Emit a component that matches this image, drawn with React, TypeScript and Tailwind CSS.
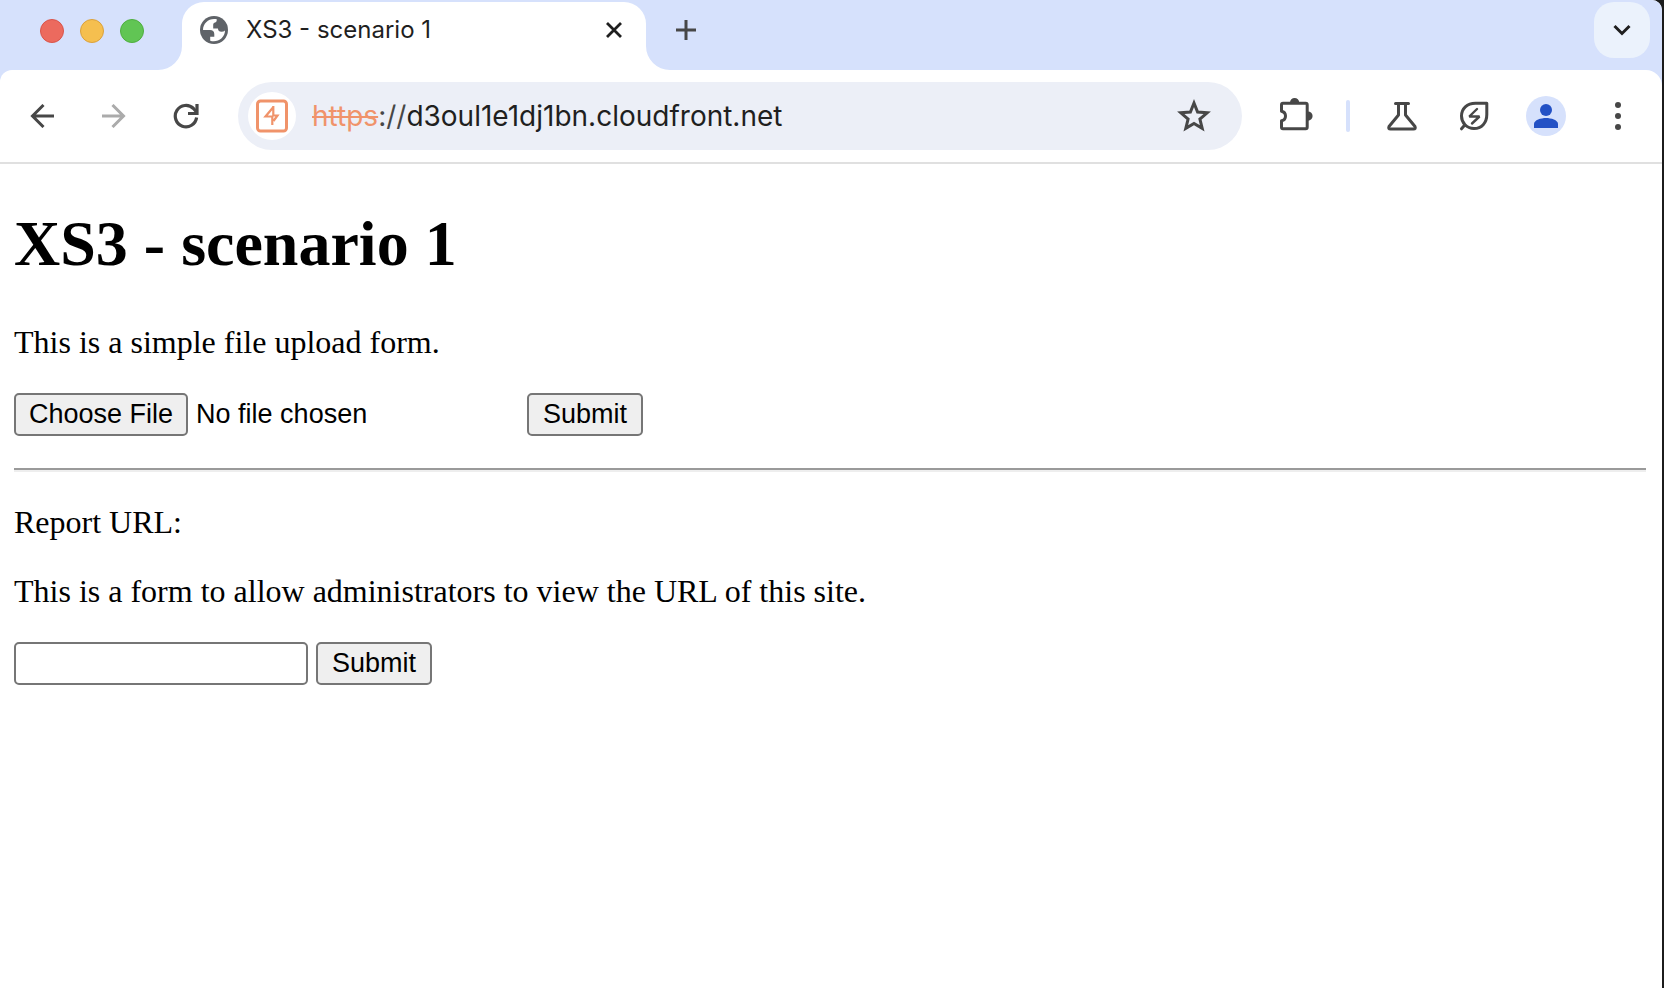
import React from "react";

const toolIcon = "shrink-0 text-[#474747]";

function Globe() {
  return (
    <svg viewBox="0 0 28 28" className="size-7 shrink-0" aria-hidden="true">
      <circle cx="14" cy="14" r="14" fill="#5f6368" />
      <path
        d="M16.800 3.300C9.500 1.600 3 7 3 14h7c2.600 0 4.300 1.500 4.300 3.900v2.900h-4.100v3.900C17.500 27 25 21.800 25 14.500c-.9.8-2.100 1.200-3.500 1.200-2.300 0-3.300-1-3.600-3.200h-4.700V8.800c0-1.400.7-2.100 2-2.300 1.200-.2 1.600-1.500 1.600-3.200z"
        fill="#fff"
      />
    </svg>
  );
}

function ProxyIcon() {
  return (
    <svg viewBox="0 0 32 34" className="h-[34px] w-8" fill="none" stroke="#f0936a" aria-hidden="true">
      <rect x="1.500" y="2" width="29" height="30" rx="3" strokeWidth="3" />
      <path d="M17.300 7v9.500h4.200l-4 5.500M17 8.500L9.500 17.500h6.800V26" strokeWidth="2.200" />
    </svg>
  );
}

function Tab() {
  return (
    <div className="relative mt-[2px] flex h-[68px] w-[464px] items-start rounded-t-[22px] bg-white pl-[18px] pr-[20px]">
      <svg viewBox="0 0 24 24" className="absolute bottom-0 -left-6 size-6" aria-hidden="true">
        <path d="M24 0v24H0A24 24 0 0 0 24 0z" fill="#fff" />
      </svg>
      <svg viewBox="0 0 24 24" className="absolute -right-6 bottom-0 size-6" aria-hidden="true">
        <path d="M0 0v24h24A24 24 0 0 1 0 0z" fill="#fff" />
      </svg>
      <div className="flex h-14 w-full items-center">
        <Globe />
        <span className="ml-[18px] flex-1 font-['Inter',sans-serif] text-[24px] leading-8 text-[#1f1f1f]">
          XS3 - scenario 1
        </span>
        <button aria-label="Close tab" className="flex size-6 items-center justify-center">
          <svg viewBox="0 0 16 16" className="size-4" fill="none" stroke="#1f1f1f" strokeWidth="2.800">
            <path d="M1 1l14 14M15 1L1 15" />
          </svg>
        </button>
      </div>
    </div>
  );
}

function TabStrip() {
  return (
    <div className="flex h-[70px] items-start">
      <div className="mt-[19px] mr-[38px] ml-10 flex gap-4">
        <button aria-label="Close" className="size-6 rounded-full border border-[#d9544a] bg-[#ec6a5e]" />
        <button aria-label="Minimize" className="size-6 rounded-full border border-[#dba13c] bg-[#f5bf4f]" />
        <button aria-label="Zoom" className="size-6 rounded-full border border-[#4fae3f] bg-[#61c554]" />
      </div>
      <Tab />
      <button aria-label="New tab" className="mt-[2px] ml-3 flex size-14 items-center justify-center">
        <svg viewBox="0 0 20 20" className="size-5" fill="none" stroke="#474747" strokeWidth="3">
          <path d="M10 0v20M0 10h20" />
        </svg>
      </button>
      <button
        aria-label="Search tabs"
        className="mt-[2px] mr-3 ml-auto flex size-14 items-center justify-center rounded-[20px] bg-[#ebf2fc]"
      >
        <svg viewBox="0 0 18 12" className="h-3 w-[18px]" fill="none" stroke="#1f1f1f" strokeWidth="3">
          <path d="M1.500 2L9 9.500 16.500 2" />
        </svg>
      </button>
    </div>
  );
}

function Toolbar() {
  return (
    <div className="flex h-[94px] items-center rounded-tl-[12px] rounded-tr-[16px] border-b-2 border-[#e0e0e0] bg-white pr-[26px] pl-[24px]">
      <button aria-label="Back" className="flex size-9 items-center justify-center">
        <svg viewBox="0 0 24 24" className="size-6" fill="none" stroke="#474747" strokeWidth="3">
          <path d="M24 12H2.500M13.500 1L2.500 12l11 11" />
        </svg>
      </button>
      <button aria-label="Forward" disabled className="ml-9 flex size-9 items-center justify-center">
        <svg viewBox="0 0 24 24" className="size-6" fill="none" stroke="#ababab" strokeWidth="3">
          <path d="M0 12h21.500M10.500 1l11 11-11 11" />
        </svg>
      </button>
      <button aria-label="Reload" className="ml-9 flex size-9 items-center justify-center">
        <svg viewBox="0 0 26 26" className="size-[26px]" fill="none" stroke="#474747" strokeWidth="3.200">
          <path d="M23.600 14.500A10.700 10.700 0 1 1 20.500 5.500L23.500 9" />
          <path d="M24 1v9.500h-9" />
        </svg>
      </button>

      <div className="ml-[34px] flex h-[68px] min-w-0 flex-1 items-center rounded-full bg-[#eceff7] pr-[30px] pl-[10px]">
        <div className="flex size-12 shrink-0 items-center justify-center rounded-full bg-white">
          <ProxyIcon />
        </div>
        <div className="ml-4 flex-1 font-['Inter',sans-serif] text-[28px] leading-9 whitespace-nowrap text-[#1f1f1f]">
          <span className="text-[#f0936a] line-through">https</span>
          <span className="text-[#474747]">://</span>d3oul1e1dj1bn.cloudfront.net
        </div>
        <button aria-label="Bookmark this tab" className="size-9">
          <svg viewBox="0 0 36 36" className="size-9" fill="none" stroke="#474747" strokeWidth="3">
            <path d="M18 5l3.600 9 9.600.8-7.300 6.200 2.300 9.400-8.200-5-8.200 5 2.300-9.400-7.300-6.200 9.600-.8z" />
          </svg>
        </button>
      </div>

      <button aria-label="Extensions" className={"ml-[34px] size-9 " + toolIcon}>
        <svg viewBox="-1 0 36 36" className="size-9 overflow-visible">
          <path
            d="M4.500 6.700q0-1.500 1.500-1.500h22.700q1.500 0 1.500 1.500v22.600q0 1.500-1.500 1.500H6q-1.500 0-1.500-1.500v-6.500c2.800-.6 4-2.500 4-4.800s-1.200-4.200-4-4.800z"
            fill="none"
            stroke="currentColor"
            strokeWidth="3"
            strokeLinejoin="round"
          />
          <path d="M13 4.500a4.600 4.600 0 0 1 9.200 0zM31 13.500a4.600 4.600 0 0 1 0 9.200z" fill="currentColor" />
        </svg>
      </button>
      <div className="ml-[34px] h-8 w-1 rounded-full bg-[#d6e1fc]" />
      <button aria-label="Labs" className={"ml-[34px] size-9 " + toolIcon}>
        <svg viewBox="0 0 36 36" className="size-9" fill="none" stroke="currentColor" strokeWidth="3" strokeLinejoin="round" strokeLinecap="round">
          <path d="M11.500 5.500h13M14.500 6v11L5 28.500q-1 2.500 1.500 2.500h23q2.500 0 1.500-2.500L21.500 17V6" />
        </svg>
      </button>
      <button aria-label="Energy saver" className={"ml-9 size-9 " + toolIcon}>
        <svg viewBox="0 0 36 36" className="size-9" fill="none" stroke="currentColor" strokeWidth="3" strokeLinecap="round">
          <path
            d="M30.800 5.200H19.500C11 5.200 5.500 10.500 5.500 18c0 3.500 1.300 6.500 3.500 8.800 2.300 2.400 5.500 3.700 9 3.700 7.500 0 12.800-5.500 12.800-14zM5.500 30.800l3.500-4"
            strokeLinejoin="round"
          />
          <path d="M21 11L13.300 18.500H23.500L16 25.500" strokeWidth="2.400" strokeLinejoin="bevel" />
        </svg>
      </button>
      <button aria-label="Profile" className="ml-[34px] size-10 shrink-0 overflow-hidden rounded-full bg-[#d6e1fc]">
        <svg viewBox="0 0 40 40" className="size-10" fill="#2351c5">
          <circle cx="20" cy="14" r="6" />
          <path d="M8 32v-4c0-4 7-6 12-6s12 2 12 6v4z" />
        </svg>
      </button>
      <button aria-label="Menu" className={"ml-[34px] size-9 " + toolIcon}>
        <svg viewBox="0 0 36 36" className="size-9" fill="currentColor">
          <circle cx="18" cy="7" r="3" />
          <circle cx="18" cy="18" r="3" />
          <circle cx="18" cy="29" r="3" />
        </svg>
      </button>
    </div>
  );
}

const control = "h-[43px] rounded-[5px] border-2 border-[#767676]";
const buttonLook = control + " bg-[#efefef] px-[14px] pb-[2px] leading-[30px]";

function Page() {
  return (
    <main className="pt-[43px] pr-[16px] pl-[14px] font-['Liberation_Serif',serif] text-[32px] leading-[37px] text-black">
      <h1 className="text-[64px] leading-[74px] font-bold">XS3 - scenario 1</h1>
      <p className="mt-[43px]">This is a simple file upload form.</p>
      <form className="mt-8 flex items-center font-['Liberation_Sans',sans-serif] text-[27px]" onSubmit={(e) => e.preventDefault()}>
        <input
          type="file"
          aria-label="File to upload"
          className="h-[43px] w-[513px] leading-[39px] file:mr-2 file:h-[43px] file:rounded-[5px] file:border-2 file:border-solid file:border-[#767676] file:bg-[#efefef] file:px-[13px]"
        />
        <button type="submit" className={buttonLook}>Submit</button>
      </form>
      <hr className="mt-8 h-1 border-t-2 border-b-2 border-t-[#9a9a9a] border-b-[#eeeeee]" />
      <p className="mt-8">Report URL:</p>
      <p className="mt-8">This is a form to allow administrators to view the URL of this site.</p>
      <form className="mt-8 flex items-center gap-2 font-['Liberation_Sans',sans-serif] text-[27px]" onSubmit={(e) => e.preventDefault()}>
        <input type="text" aria-label="Report URL" className={control + " w-[294px] bg-white px-1"} />
        <button type="submit" className={buttonLook}>Submit</button>
      </form>
    </main>
  );
}

export default function App() {
  return (
    <div className="min-h-screen bg-[#1c1c1c] pr-[2px]">
      <div className="min-h-screen rounded-tr-[10px] bg-white">
        <header className="rounded-tr-[10px] bg-[#d6e1fc]">
          <TabStrip />
          <Toolbar />
        </header>
        <Page />
      </div>
    </div>
  );
}
